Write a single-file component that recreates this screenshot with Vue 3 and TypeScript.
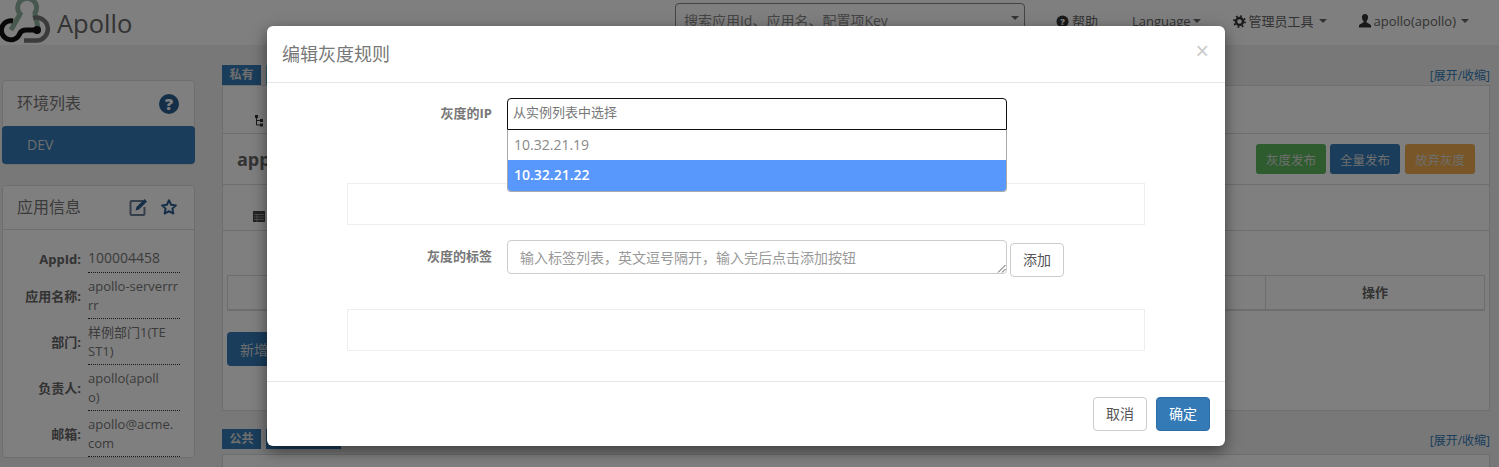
<script setup lang="ts">
interface Field { label: string; value: string }
const fields: Field[] = [
  { label: 'AppId:', value: '100004458' },
  { label: '应用名称:', value: 'apollo-serverrr\nrr' },
  { label: '部门:', value: '样例部门1(TE\nST1)' },
  { label: '负责人:', value: 'apollo(apoll\no)' },
  { label: '邮箱:', value: 'apollo@acme.\ncom' },
]
</script>

<template>
  <div class="page">
    <header class="navbar">
      <div class="brand">
        <svg class="logo" width="50" height="44" viewBox="0 0 50 44" fill="none">
          <path d="M11 30 L20 14 A9.500 9.500 0 1 1 35 13 L38 28" stroke="#8fb39c" stroke-width="5" />
          <path d="M33 18 A11.500 11.500 0 1 1 36 40.500 H24" stroke="#777" stroke-width="4.500" />
          <path d="M13 21 A9.500 9.500 0 1 0 20 33 Q22 30 26 30 H37" stroke="#111" stroke-width="5" />
          <circle cx="37" cy="30" r="4" fill="#111" />
        </svg>
        <span class="brand-name">Apollo</span>
      </div>
      <div class="nav-right">
        <div class="search"><span>搜索应用Id、应用名、配置项Key</span><i class="caret search-caret"></i></div>
        <span class="nav-item help">
          <svg class="nav-ico" width="13" height="13" viewBox="0 0 14 14"><circle cx="7" cy="7" r="6.500" fill="#333" /><text x="7" y="11" text-anchor="middle" class="q-mark" fill="#fff" font-size="10">?</text></svg>帮助
        </span>
        <span class="nav-item lang">Language<i class="caret"></i></span>
        <span class="nav-item admin">
          <svg class="nav-ico" width="13" height="13" viewBox="0 0 14 14"><circle cx="7" cy="7" r="3.800" fill="none" stroke="#333" stroke-width="2.600" /><circle cx="7" cy="7" r="6" fill="none" stroke="#333" stroke-width="1.800" stroke-dasharray="2 2.710" /></svg>管理员工具 <i class="caret"></i>
        </span>
        <span class="nav-item user">
          <svg class="nav-ico" width="12" height="14" viewBox="0 0 12 14"><path d="M6 0a3 3 0 0 1 3 3.500c0 1.500-.8 3-1.500 3.500v1.200L12 11v2.500H0V11l4.500-2.800V7C3.800 6.500 3 5 3 3.500A3 3 0 0 1 6 0z" fill="#333" /></svg>apollo(apollo) <i class="caret"></i>
        </span>
      </div>
    </header>

    <div class="content">
      <aside class="side">
        <section class="side-panel env">
          <div class="side-head">
            <span>环境列表</span>
            <svg width="20" height="20" viewBox="0 0 20 20"><circle cx="10" cy="10" r="10" fill="#2a5f90" /><text x="10" y="16" text-anchor="middle" class="q-mark" fill="#fff" font-size="16">?</text></svg>
          </div>
          <div class="env-item">DEV</div>
        </section>
        <section class="side-panel info">
          <div class="side-head info-head">
            <span>应用信息</span>
            <span class="head-icons">
              <svg width="19" height="18" viewBox="0 0 19 18" fill="none"><path d="M14 3H2.500A1 1 0 0 0 1.500 4v12a1 1 0 0 0 1 1h12a1 1 0 0 0 1-1V9" stroke="#6a7f92" stroke-width="2" /><path d="M6.500 12.500l1-3.500L15.500 1l2.500 2.500L10 11.500z" fill="#2a5f90" /></svg>
              <svg width="18" height="18" viewBox="0 0 24 24" fill="none"><path d="M12 3l2.800 6 6.500.8-4.800 4.400 1.300 6.500L12 17.500 6.200 20.700l1.300-6.500L2.700 9.800 9.200 9z" stroke="#2a5f90" stroke-width="2.600" stroke-linejoin="round" /></svg>
            </span>
          </div>
          <dl class="fields">
            <div v-for="f in fields" :key="f.label" class="field">
              <dt>{{ f.label }}</dt>
              <dd>{{ f.value }}</dd>
            </div>
          </dl>
        </section>
      </aside>

      <main class="main">
        <div class="ns-top">
          <span class="tag">私有</span><span class="tag tag-info"></span>
          <a class="toggle">[展开/收缩]</a>
        </div>
        <section class="ns-panel">
          <div class="ns-row row-branch">
            <svg width="11" height="13" viewBox="0 0 11 13"><path d="M1 1h3v3H1zM6 5h3v3H6zM6 9.500h3v3H6z" fill="#333" /><path d="M2.500 4v7H6M2.500 6.500H6" stroke="#333" fill="none" /></svg>
          </div>
          <div class="ns-row row-title">
            <b>application</b>
            <div class="actions">
              <button class="btn btn-green">灰度发布</button>
              <button class="btn btn-blue">全量发布</button>
              <button class="btn btn-orange">放弃灰度</button>
            </div>
          </div>
          <div class="ns-row row-table-tab">
            <svg width="12" height="11" viewBox="0 0 12 11"><path d="M0 0h12v11H0z" fill="#444" /><path d="M1 3.500h10M1 6h10M1 8.500h10M4 3v8" stroke="#aaa" stroke-width=".8" /></svg>
          </div>
          <div class="rule-table"><span class="col-main"></span><span class="col-op">操作</span></div>
          <button class="btn-new">新增规则</button>
        </section>
        <div class="ns-top second">
          <span class="tag">公共</span><span class="tag tag-blue"></span>
          <a class="toggle">[展开/收缩]</a>
        </div>
        <section class="ns-panel tail"></section>
      </main>
    </div>

    <div class="backdrop"></div>

    <div class="modal">
      <div class="modal-head">
        <h4>编辑灰度规则</h4>
        <span class="close">×</span>
      </div>
      <div class="modal-body">
        <div class="form-row row-ip">
          <label>灰度的IP</label>
          <div class="select-wrap">
            <div class="select-input">从实例列表中选择</div>
            <ul class="dropdown">
              <li>10.32.21.19</li>
              <li class="active">10.32.21.22</li>
            </ul>
          </div>
        </div>
        <div class="empty-box"></div>
        <div class="form-row row-label">
          <label>灰度的标签</label>
          <div class="fake-textarea">输入标签列表，英文逗号隔开，输入完后点击添加按钮
            <svg class="grip" width="9" height="9" viewBox="0 0 9 9"><path d="M1 8.500L8.500 1M5 8.500L8.500 5" stroke="#555" /></svg>
          </div>
          <button class="btn-default add">添加</button>
        </div>
        <div class="empty-box last"></div>
      </div>
      <div class="modal-foot">
        <button class="btn-default foot-btn">取消</button>
        <button class="btn-primary foot-btn">确定</button>
      </div>
    </div>
  </div>
</template>

<style>
html, body { margin: 0; height: 467px; overflow: hidden; }
</style>

<style scoped>
* { box-sizing: border-box; }
.page {
  position: relative;
  width: 1499px;
  height: 467px;
  overflow: hidden;
  background: #f1f1f1;
  font-family: "Open Sans", "Noto Sans CJK SC", sans-serif;
  font-size: 13px;
  color: #333;
}
.navbar {
  height: 45px;
  background: #fff;
  display: flex;
  justify-content: space-between;
}
.brand { display: flex; align-items: flex-start; }
.brand-name {
  font-family: "Open Sans", sans-serif;
  font-size: 25.500px;
  line-height: 46px;
  margin-left: 7px;
  color: #666;
}
.nav-right { display: flex; align-items: flex-start; padding-right: 30px; }
.search {
  width: 350px;
  height: 34px;
  margin-top: 3px;
  border: 1px solid #888;
  border-radius: 4px;
  padding: 0 5px 0 8px;
  line-height: 33px;
  font-size: 14px;
  color: #888;
  display: flex;
  justify-content: space-between;
}
.search-caret { margin-top: 12px; border-top-width: 5px; border-left-width: 4px; border-right-width: 4px; color: #666; }
.nav-item { margin-top: 12px; line-height: 18px; white-space: nowrap; display: flex; align-items: center; color: #666; }
.nav-ico { margin-right: 3px; }
.help { margin-left: 31px; }
.lang { margin-left: 34px; }
.admin { margin-left: 32px; }
.user { margin-left: 32px; }
.q-mark { font-family: "Open Sans", sans-serif; font-weight: 800; }
.caret {
  display: inline-block;
  width: 0;
  height: 0;
  margin-left: 2px;
  border-top: 4px solid currentColor;
  border-left: 4px solid transparent;
  border-right: 4px solid transparent;
}
.admin .caret, .user .caret { margin-left: 5px; }
.content { display: flex; align-items: flex-start; }
.side { width: 193px; margin: 35px 0 0 2px; flex: none; }
.side-panel { background: #fff; border: 1px solid #ddd; border-radius: 4px; }
.env { height: 85px; margin-bottom: 20px; }
.side-head {
  height: 45px;
  padding: 0 15px 0 14px;
  display: flex;
  justify-content: space-between;
  align-items: center;
  font-size: 16px;
  color: #777;
}
.side-head > span:first-child { margin-bottom: 4px; }
.env-item {
  height: 38px;
  margin: 0 -1px;
  background: #337ab7;
  border-radius: 4px;
  color: #ddd;
  padding-left: 25px;
  line-height: 37px;
  font-size: 14px;
}
.info-head { height: 44px; border-bottom: 1px solid #ddd; padding-right: 16px; }
.head-icons { display: flex; gap: 12px; margin-bottom: 2px; }
.fields { margin: 0; padding: 15px 14px 0 0; }
.field { display: flex; }
dt {
  width: 78px;
  flex: none;
  align-self: center;
  text-align: right;
  font-weight: 700;
  color: #666;
  line-height: 19px;
}
dd {
  margin: 0 0 0 7px;
  flex: 1;
  min-height: 28px;
  padding: 4px 0 3px;
  border-bottom: 1px dotted #333;
  line-height: 19px;
  color: #777;
  white-space: pre-line;
}
.field:first-child dd { font-size: 14px; padding-top: 3px; }
.main { margin: 20px 9px 0 27px; flex: 1; min-width: 0; }
.ns-top { height: 20px; display: flex; position: relative; }
.tag {
  width: 39px;
  height: 20px;
  background: #337ab7;
  color: #ddd;
  font-size: 12px;
  font-weight: 700;
  text-align: center;
  line-height: 20px;
}
.tag-info { width: 75px; margin-left: 5px; background: #5bc0de; }
.tag-blue { width: 75px; margin-left: 5px; background: #337ab7; }
.toggle {
  margin-left: auto;
  font-size: 12px;
  color: #337ab7;
  line-height: 22px;
}
.second .toggle { line-height: 24px; }
.ns-panel {
  height: 326px;
  background: #fff;
  border: 1px solid #ddd;
  padding: 0;
}
.ns-row { border-bottom: 1px solid #ddd; }
.row-branch { height: 48px; padding: 27px 0 0 31px; }
.row-title {
  height: 51px;
  display: flex;
  justify-content: space-between;
  align-items: center;
  padding: 0 14px 0 14px;
}
.row-title b { font-size: 18px; color: #666; }
.actions { display: flex; gap: 4px; }
.btn-orange { margin-left: 1px; }
.btn {
  width: 70px;
  height: 30px;
  border: 0;
  border-radius: 3px;
  color: #ddd;
  font: inherit;
  font-size: 12.500px;
  padding: 0;
}
.btn-green { background: #5cb85c; }
.btn-blue { background: #337ab7; }
.btn-orange { background: #f0ad4e; }
.row-table-tab { height: 46px; padding: 23px 0 0 30px; }
.rule-table {
  display: flex;
  height: 36px;
  margin: 44px 4px 0 4px;
  border: 1px solid #ddd;
  border-bottom-width: 2px;
}
.col-main { flex: 1; border-right: 1px solid #ddd; }
.col-op { width: 218px; text-align: center; font-weight: 700; font-size: 13px; color: #666; line-height: 33px; }
.btn-new {
  display: block;
  width: 82px;
  height: 34px;
  margin: 21px 0 0 4px;
  background: #337ab7;
  border: 0;
  border-radius: 4px;
  color: #ddd;
  font: inherit;
  font-size: 14px;
  padding: 0 0 0 13px;
  text-align: left;
  white-space: nowrap;
  overflow: hidden;
}
.second { margin-top: 18px; height: 25px; }
.tail { height: 40px; }
.backdrop { position: absolute; inset: 0; background: rgba(0, 0, 0, .5); }
.modal {
  position: absolute;
  left: 267px;
  top: 26px;
  width: 958px;
  height: 420px;
  background: #fff;
  border-radius: 6px;
  box-shadow: 0 5px 15px rgba(0, 0, 0, .5);
  display: flex;
  flex-direction: column;
}
.modal-head {
  height: 57px;
  flex: none;
  border-bottom: 1px solid #e5e5e5;
  display: flex;
  justify-content: space-between;
  align-items: center;
  padding: 0 16px 2px 15px;
}
h4 { margin: 0; font-size: 18px; font-weight: 400; color: #777; }
.close { font-family: "Liberation Sans", sans-serif; font-size: 23px; font-weight: 400; color: #ccc; margin-bottom: 4px; }
.modal-body { flex: 1; padding: 15px 80px 0; }
.form-row { display: flex; align-items: flex-start; }
label {
  width: 145px;
  flex: none;
  text-align: right;
  font-weight: 700;
  font-size: 13px;
  color: #777;
}
.row-ip label { line-height: 30px; }
.row-label label { line-height: 32px; }
.select-wrap { position: relative; width: 500px; margin-left: 15px; }
.select-input {
  height: 32px;
  border: 1px solid #111;
  border-radius: 4px 4px 0 0;
  padding-left: 5px;
  line-height: 27px;
  color: #777;
}
.dropdown {
  position: absolute;
  left: 0;
  right: 0;
  top: 32px;
  z-index: 2;
  margin: 0;
  padding: 0;
  list-style: none;
  background: #fff;
  border: 1px solid #aaa;
  border-top: 0;
  border-radius: 0 0 4px 4px;
  overflow: hidden;
  font-size: 14px;
  color: #888;
}
.dropdown li { height: 30px; line-height: 30px; padding-left: 6px; }
.dropdown .active { height: 31px; background: #5897fb; color: #fff; font-weight: 600; }
.empty-box { width: 798px; height: 42px; margin-top: 53px; border: 1px solid #eee; }
.row-label { margin-top: 15px; }
.last { margin-top: 32px; }
.fake-textarea {
  position: relative;
  width: 500px;
  height: 34px;
  margin-left: 15px;
  border: 1px solid #ccc;
  border-radius: 4px;
  padding-left: 12px;
  line-height: 33px;
  font-size: 14px;
  color: #999;
}
.grip { position: absolute; right: 0; bottom: 0; }
.btn-default, .btn-primary {
  height: 34px;
  width: 54px;
  border-radius: 4px;
  font: inherit;
  font-size: 14px;
  line-height: 30px;
  padding: 0;
}
.btn-default { background: #fff; border: 1px solid #ccc; color: #555; }
.btn-primary { background: #337ab7; border: 1px solid #2e6da4; color: #fff; }
.add { margin: 3px 0 0 3px; }
.modal-foot {
  height: 65px;
  flex: none;
  border-top: 1px solid #e5e5e5;
  display: flex;
  justify-content: flex-end;
  align-items: flex-start;
  gap: 9px;
  padding: 15px 15px 0 0;
}
</style>
